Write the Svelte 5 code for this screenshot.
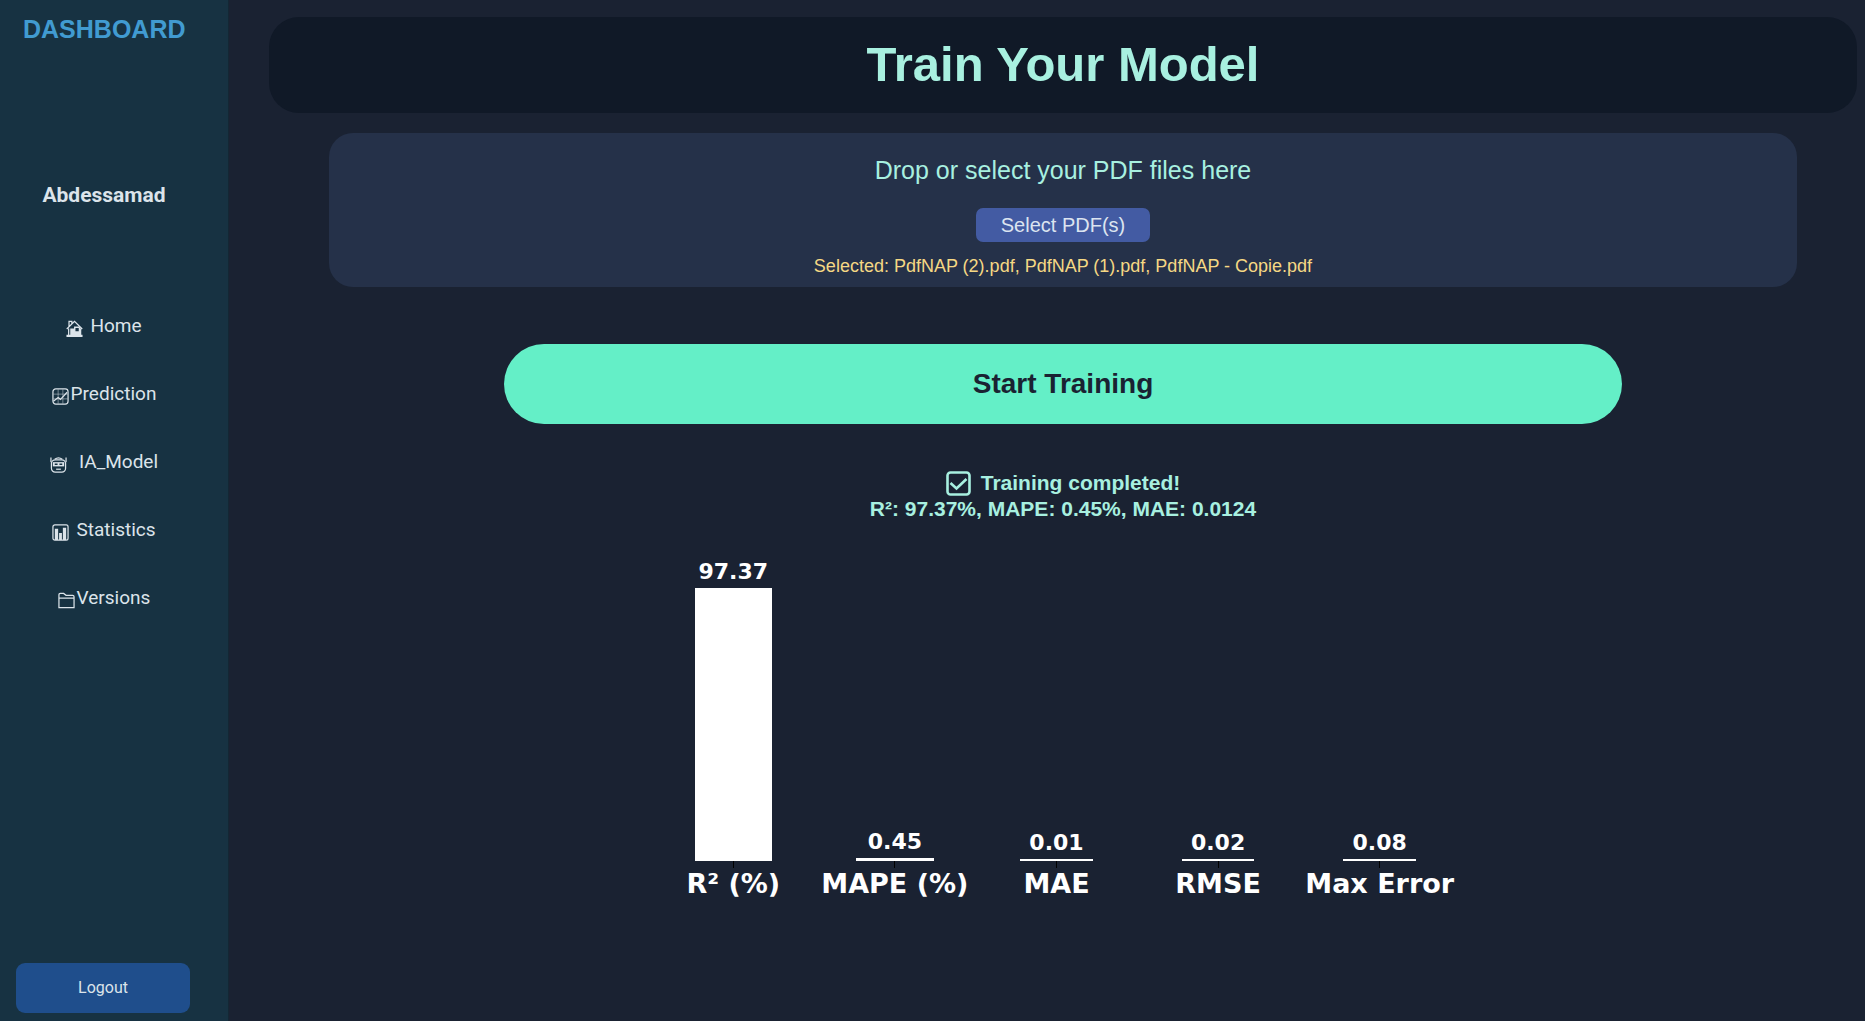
<script>
  const user = 'Abdessamad';
  const links = [
    { label: 'Home', icon: 'home', space: 'normal' },
    { label: 'Prediction', icon: 'trend', space: 'tight' },
    { label: 'IA_Model', icon: 'robot', space: 'wide' },
    { label: 'Statistics', icon: 'bars', space: 'normal' },
    { label: 'Versions', icon: 'folder', space: 'tight' }
  ];
  const files = ['PdfNAP (2).pdf', 'PdfNAP (1).pdf', 'PdfNAP - Copie.pdf'];
  const metrics = [
    { name: 'R² (%)', value: 97.37 },
    { name: 'MAPE (%)', value: 0.45 },
    { name: 'MAE', value: 0.01 },
    { name: 'RMSE', value: 0.02 },
    { name: 'Max Error', value: 0.08 }
  ];
  const peak = Math.max(...metrics.map((m) => m.value));
  let picker;
</script>

<div class="app">
  <aside class="sidebar">
    <h2 class="brand">DASHBOARD</h2>
    <p class="user">{user}</p>
    <nav class="menu" aria-label="Main">
      {#each links as link}
        <a class="link {link.space}" href="#{link.label.toLowerCase()}">
          <svg class="icon" viewBox="0 0 18 18" aria-hidden="true">
            {#if link.icon === 'home'}
              <path class="line" d="M.8 9.500 9 1.500l8.200 8M3.200 7V1.500h3v2.500M2.800 9v7M15.500 9v7" />
              <path class="fill" d="M4.500 9h4v7h-4zM8.500 7h6v1.500h-6zM8.500 12h7v4h-7zM8.500 8h1.500v5H8.500zM13.500 8H15v5h-1.500zM.5 15.500h17V18H.5z" />
            {:else if link.icon === 'trend'}
              <rect class="line" x="1" y="1" width="16" height="16" rx="3" />
              <path class="thin" d="M6.500 1.500v15M11.500 1.500v15M1.500 6.500h15M1.500 11.500h15" />
              <path class="line" d="M1.500 14 6.500 10l2.500 2L16 4.500" />
            {:else if link.icon === 'robot'}
              <path class="line" d="M1 1.500v5M17 1.500v5M5 3.500Q9 .5 13 3.500" />
              <rect class="line" x="1.500" y="4" width="15" height="13" rx="4" />
              <path class="fill" d="M3 6.500h12v4.500H3z" />
              <path class="hole" d="M5 8h3v1.500H5zM10 8h3v1.500h-3z" />
              <path class="line" d="M6.500 14h5" />
            {:else if link.icon === 'bars'}
              <rect class="line" x="1" y="1" width="16" height="16" rx="2" />
              <path class="fill" d="M3 5h3.500v12H3zM7.500 9.500h3V17h-3zM11.500 4H15v13h-3.500z" />
            {:else}
              <path class="line" d="M1 16.500V3Q1 1.500 2.500 1.500H6l2.500 2h7q1.500 0 1.500 1.500v11.500zM1 6.500h16" />
            {/if}
          </svg>
          <span>{link.label}</span>
        </a>
      {/each}
    </nav>
    <button class="logout" type="button">Logout</button>
  </aside>

  <main class="main">
    <header class="title"><h1>Train Your Model</h1></header>

    <section class="upload">
      <label class="hint" for="pdf-files">Drop or select your PDF files here</label>
      <input id="pdf-files" type="file" accept=".pdf" multiple hidden bind:this={picker} />
      <button class="select" type="button" onclick={() => picker.click()}>Select PDF(s)</button>
      <p class="chosen">Selected: {files.join(', ')}</p>
    </section>

    <button class="start" type="button">Start Training</button>

    <div class="status" role="status">
      <p class="done">
        <svg class="check" viewBox="0 0 25 25" aria-hidden="true">
          <rect x="1.500" y="1.500" width="22" height="22" rx="3" />
          <path d="M4.500 12l6 5.500L20.500 8" />
        </svg>
        <span>Training completed!</span>
      </p>
      <p>R²: 97.37%, MAPE: 0.45%, MAE: 0.0124</p>
    </div>

    <section class="chart" aria-label="Model metrics">
      {#each metrics as metric}
        <div class="column">
          <div class="plot">
            <span class="value">{metric.value}</span>
            <div class="bar" style="height: calc({(metric.value / peak) * 100}% + 2px)"></div>
          </div>
          <span class="tick"></span>
          <span class="name">{metric.name}</span>
        </div>
      {/each}
    </section>
  </main>
</div>

<style>
  :global(body) {
    margin: 0;
    background: #1a2232;
  }
  h1, h2, p {
    margin: 0;
  }
  button {
    border: 0;
    cursor: pointer;
  }
  .app {
    display: flex;
    min-height: 100vh;
    font-family: "Liberation Sans", Arial, sans-serif;
  }
  .sidebar {
    box-sizing: border-box;
    display: flex;
    flex-direction: column;
    flex: none;
    width: 229px;
    padding: 14px 38px 8px 16px;
    background: #173242;
    border-right: 1px solid #142734;
    font-family: Roboto, sans-serif;
    color: #dce4ea;
  }
  .brand {
    padding-left: 7px;
    font: bold 25px/30px "Liberation Sans", Arial, sans-serif;
    color: #419bd1;
  }
  .user {
    margin-top: 139px;
    padding-left: 2px;
    font-size: 21px;
    font-weight: bold;
    line-height: 24px;
    text-align: center;
  }
  .menu {
    display: flex;
    flex-direction: column;
    gap: 44px;
    margin-top: 107px;
    padding-left: 2px;
  }
  .link {
    display: flex;
    justify-content: center;
    align-items: flex-end;
    font-size: 19px;
    line-height: 24px;
    color: inherit;
    text-decoration: none;
  }
  .tight { gap: 2px; }
  .normal { gap: 7px; }
  .wide { gap: 12px; }
  .icon {
    width: 17px;
    height: 17px;
    margin-bottom: 1px;
  }
  .line, .thin {
    fill: none;
    stroke: #dce4ea;
    stroke-width: 1.3;
  }
  .thin {
    stroke-width: 1;
    opacity: 0.5;
  }
  .fill { fill: #dce4ea; }
  .hole { fill: #173242; }
  .logout {
    height: 50px;
    margin-top: auto;
    padding-bottom: 3px;
    border-radius: 9px;
    background: #1f4e8c;
    font: 16px Roboto, sans-serif;
    color: #dce4ea;
  }
  .main {
    display: flex;
    flex-direction: column;
    align-items: center;
    flex: 1;
    min-width: 0;
    padding: 17px 8px 0 40px;
    color: #a8f0e0;
  }
  .title {
    align-self: stretch;
    padding: 19px 20px 21px;
    border-radius: 30px;
    background: #101927;
    text-align: center;
  }
  h1 {
    font-size: 49px;
    line-height: 56px;
  }
  .upload {
    box-sizing: border-box;
    display: flex;
    flex-direction: column;
    align-items: center;
    align-self: stretch;
    margin: 20px 60px 0;
    padding: 22px 20px 9px;
    border-radius: 24px;
    background: #253149;
  }
  .hint {
    font-size: 25px;
    line-height: 30px;
  }
  .select {
    height: 34px;
    margin-top: 23px;
    padding: 0 25px;
    border-radius: 7px;
    background: #435ba3;
    font: 20px "Liberation Sans", Arial, sans-serif;
    color: #dce4f0;
  }
  .chosen {
    margin-top: 12px;
    font-size: 18px;
    line-height: 24px;
    color: #f5d884;
  }
  .start {
    width: 70.4%;
    height: 80px;
    margin-top: 57px;
    border-radius: 40px;
    background: #64efc7;
    font: bold 28px "Liberation Sans", Arial, sans-serif;
    color: #1a2232;
  }
  .status {
    margin-top: 46px;
    font-size: 21px;
    font-weight: bold;
    line-height: 26px;
    text-align: center;
  }
  .done {
    display: flex;
    justify-content: center;
    align-items: center;
    gap: 10px;
  }
  .check {
    width: 25px;
    height: 25px;
    fill: none;
    stroke: #a8f0e0;
    stroke-width: 2.6;
  }
  .chart {
    display: grid;
    grid-template-columns: repeat(5, 1fr);
    width: 808px;
    max-width: 100%;
    margin-top: 35px;
    padding-right: 13px;
    font-family: "DejaVu Sans", sans-serif;
    font-weight: bold;
    color: #fff;
  }
  .column {
    display: flex;
    flex-direction: column;
    align-items: center;
  }
  .plot {
    display: flex;
    flex-direction: column;
    justify-content: flex-end;
    align-items: center;
    box-sizing: border-box;
    width: 100%;
    height: 304px;
    padding-top: 33px;
  }
  .value {
    flex: none;
    margin-bottom: 3px;
    font-size: 22px;
    line-height: 26px;
  }
  .bar {
    flex: none;
    width: 45%;
    background: #fff;
  }
  .column:nth-child(-n + 2) .bar {
    width: 48%;
  }
  .tick {
    width: 1px;
    height: 7px;
    background: #000;
  }
  .name {
    font-size: 27px;
    line-height: 32px;
    white-space: nowrap;
  }
</style>
